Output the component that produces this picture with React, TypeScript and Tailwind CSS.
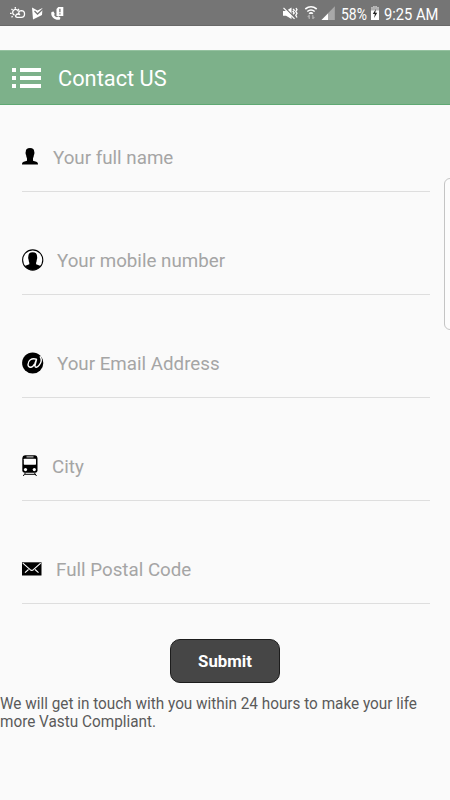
import type { ReactNode } from 'react';

const PersonIcon = () => (
  <svg width="16" height="17" viewBox="0 0 16 17" className="block">
    <path d="M8 0C11 0 12.200 1.300 12.200 3.600C12.600 4.200 12.500 6.500 11.900 7C11.700 8.800 11.300 9.700 11 10.500V12.700L14.300 13.800C15.600 14.300 16 15 16 16.600H0C0 15 .4 14.300 1.700 13.800L5 12.700V10.500C4.700 9.700 4.300 8.800 4.100 7C3.500 6.500 3.400 4.200 3.800 3.600C3.800 1.300 5 0 8 0Z" />
  </svg>
);

const ProfileIcon = () => (
  <svg width="22" height="22" viewBox="0 0 22 22" className="block">
    <circle cx="10.700" cy="11" r="10.100" fill="#fff" stroke="#000" strokeWidth="1.100" />
    <path d="M10.700 3.300C14 3.300 15 4.800 15 7.300C15.300 8 15.300 10 14.800 10.700C14.700 12 14.400 13 14.100 13.700V15.300L18.700 16.900A9.900 9.900 0 0 1 2.700 16.900L7.300 15.300V13.700C7 13 6.700 12 6.600 10.700C6.100 10 6.100 8 6.400 7.300C6.400 4.800 7.400 3.300 10.700 3.300Z" />
  </svg>
);

const AtIcon = () => (
  <svg width="22" height="22" viewBox="0 0 22 22" className="block">
    <circle cx="10.700" cy="11" r="10.600" />
    <path
      d="M14.300 7.200C9.500 5.500 6 8.700 6 12.400C6 16.300 10.500 16.200 12.900 11.600L14.600 7L13 13.400C12.700 16 15.300 15.700 17.200 13.200C19.700 10 19.500 6.800 18.300 4.800"
      fill="none"
      stroke="#fff"
      strokeWidth="1.400"
      strokeLinecap="round"
    />
  </svg>
);

const TrainIcon = () => (
  <svg width="16" height="22" viewBox="0 0 16 22" className="block">
    <path d="M3 .3H13Q15.300 .5 15.500 3V15.500Q15.500 17.500 13.500 17.700H2.300Q.3 17.500 .3 15.500V3Q.5 .5 3 .3Z" />
    <path d="M4.500 1.900H11.500" stroke="#fff" strokeWidth=".9" />
    <rect x="1.800" y="3.700" width="12.200" height="6" rx=".6" fill="#fff" />
    <circle cx="3.500" cy="14.600" r="1.600" fill="#fff" />
    <circle cx="12.300" cy="14.600" r="1.600" fill="#fff" />
    <path d="M3.500 17.700L1.300 21M12.300 17.700L14.500 21M3 19.300H13" stroke="#000" strokeWidth="1" fill="none" />
  </svg>
);

const MailIcon = () => (
  <svg width="20" height="14" viewBox="0 0 20 14" className="block">
    <path d="M0 .3H19.500V13.500H0Z" />
    <path d="M.8 1.200L8.200 7.700Q9.800 9 11.400 7.700L18.700 1.200M3 10.700L6.500 7.500M16.500 10.700L13 7.500" stroke="#fff" strokeWidth="1.100" fill="none" />
  </svg>
);

type FieldProps = { icon: ReactNode; label: string; gap: string };

const Field = ({ icon, label, gap }: FieldProps) => (
  <div className="h-[103px] border-b border-[#dedede] flex items-center pt-[35px]">
    <div className="mb-[2px]">{icon}</div>
    <span className={`${gap} text-[18.75px] leading-6 text-[#a5a5a5] whitespace-nowrap`}>{label}</span>
  </div>
);

export default function App() {
  return (
    <div className="relative w-[450px] h-[800px] overflow-hidden bg-[#fafafa] font-['Roboto',sans-serif]">
      {/* Status bar */}
      <div className="h-[26px] bg-[#757575] border-b border-[#696969] flex items-center text-white">
        <svg width="65" height="26" viewBox="0 0 65 26" fill="none" stroke="#fff" className="shrink-0">
          <g strokeWidth="1.300">
            <path d="M14.500 15.200A3 3 0 1 1 18.500 11.500" />
            <path d="M15.300 7V8.700M11.500 9L12.600 10.100M10 13.300H11.700M11.500 17.300L12.700 16.300M19 9L18 10" />
            <path d="M17.500 17.300H21.300C25.600 17.300 25.600 10.700 21.300 10.600C18.500 10.700 17.800 14 20 14.700C16.500 12.500 13.500 17.300 17.500 17.300Z" />
          </g>
          <path d="M32 7.500L37.500 10.500L42.500 8L42 15L33 19.500Z" fill="#fff" stroke="none" />
          <path d="M34.500 11L37.500 14L43.500 8.500" stroke="#757575" strokeWidth="1.300" />
          <path d="M51.500 12L53.500 11.500L54.800 14L54 15Q55 16.800 57 17.300L58.200 16.300L60.500 17.800L59.700 19.700C55 20.500 50 16.500 51.500 12Z" fill="#fff" stroke="none" />
          <path d="M58.300 7H63.300V16H56.500V9Z" fill="#fff" stroke="none" />
          <path d="M59.900 8.800V12.200M59.900 13.200V14.400" stroke="#757575" strokeWidth="1.300" />
        </svg>
        <svg width="56" height="26" viewBox="281 0 56 26" fill="none" stroke="#fff" className="ml-[216px] shrink-0">
          <path d="M283 11H286L291.500 7.500V19L286 15.800H283Z" fill="#fff" stroke="none" />
          <path d="M284.500 7.500L295.500 18.500" stroke="#757575" strokeWidth="1.600" />
          <path d="M283.500 7.800L294.500 18.800" strokeWidth="1.200" />
          <path d="M293 9L294.300 10.300L293 11.600L294.300 13L293 14.300M296 8L297 9.700L295.800 11.500L297 13.300L295.800 15.200L297 17.500" strokeWidth="1.300" />
          <path d="M305.300 9Q311 4.500 316.700 9M307.300 11.500Q311 8.500 314.700 11.500M309.200 13.800Q311 12 312.800 13.800" strokeWidth="1.600" />
          <path d="M309.300 19V15M307.800 17L309.300 15.300M312.800 15V19M314.300 17L312.800 18.700" stroke="#ababab" strokeWidth="1.300" />
          <path d="M321.500 20L334.800 6.300V20Z" fill="#a8a8a8" stroke="none" />
          <path d="M321.500 20L328 13.500V20Z" fill="#fff" stroke="none" />
        </svg>
        <span className="ml-[4px] mt-[2px] w-[27px] text-[17px] leading-5 origin-left scale-x-[0.82] whitespace-nowrap shrink-0">58%</span>
        <svg width="8" height="14" viewBox="0 0 9 14" preserveAspectRatio="none" className="ml-[3px] mt-px shrink-0">
          <path d="M2.500 0H6.500V1.500H9V14H0V1.500H2.500Z" fill="#fff" />
          <path d="M2.500 0H6.500V1.500H9V4.500H0V1.500H2.500Z" fill="#b0b0b0" />
          <path d="M5.500 3L2 8H4.300L3.500 12L7 6.800H4.800Z" fill="#222" />
        </svg>
        <span className="ml-[5px] mt-[2px] text-[17px] leading-5 origin-left scale-x-[0.865] whitespace-nowrap">9:25 AM</span>
      </div>

      {/* Header */}
      <div className="mt-[24px] h-[55px] bg-[#7db18a] border-t border-b border-t-[#95c2a0] border-b-[#5fa873] flex items-center pl-3 text-white">
        <svg width="29" height="20" viewBox="0 0 29 20" fill="currentColor">
          <path d="M0 0H4V4H0ZM8 0H29V4H8ZM0 8H4V12H0ZM8 8H29V12H8ZM0 16H4V20H0ZM8 16H29V20H8Z" />
        </svg>
        <h1 className="ml-[17px] mt-[3px] text-[21.8px] leading-7 whitespace-nowrap">Contact US</h1>
      </div>

      {/* Form */}
      <div className="ml-[22px] w-[408px] -mt-[16px]">
        <Field icon={<PersonIcon />} label="Your full name" gap="ml-[15px]" />
        <Field icon={<ProfileIcon />} label="Your mobile number" gap="ml-[13px]" />
        <Field icon={<AtIcon />} label="Your Email Address" gap="ml-[13px]" />
        <Field icon={<TrainIcon />} label="City" gap="ml-[14px]" />
        <Field icon={<MailIcon />} label="Full Postal Code" gap="ml-[14px]" />
      </div>

      <button className="block mx-auto mt-[35px] w-[110px] h-[44px] pt-[2px] rounded-[10px] bg-[#464646] border border-[#1c1c1c] text-white text-[16.8px] font-bold">
        Submit
      </button>

      <p className="mt-[12px] text-[16px] leading-[18px] text-[#5a5a5a] whitespace-nowrap origin-left scale-x-[0.957]">
        We will get in touch with you within 24 hours to make your life
        <br />
        more Vastu Compliant.
      </p>

      {/* Edge panel handle */}
      <div className="absolute top-[178px] left-[444px] w-3 h-[152px] rounded-[6px] border border-[#c4c4c4] bg-[#fcfcfc]" />
    </div>
  );
}
